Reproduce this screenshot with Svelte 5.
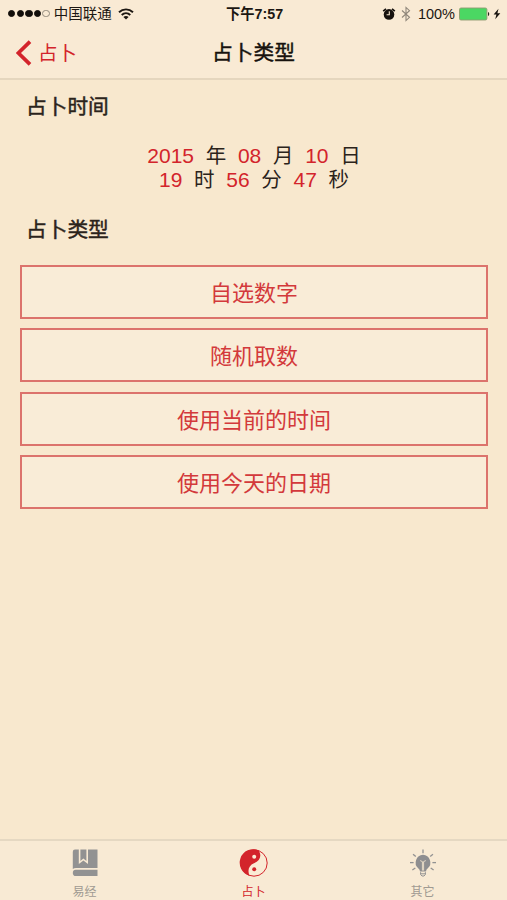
<script>
	let carrier = '中国联通';
	let clock = '下午7:57';
	let signal = [true, true, true, true, false];

	let dateRows = [
		[
			{ value: '2015', unit: '年' },
			{ value: '08', unit: '月' },
			{ value: '10', unit: '日' }
		],
		[
			{ value: '19', unit: '时' },
			{ value: '56', unit: '分' },
			{ value: '47', unit: '秒' }
		]
	];

	let types = ['自选数字', '随机取数', '使用当前的时间', '使用今天的日期'];

	let tabs = [
		{ id: 'book', label: '易经' },
		{ id: 'taiji', label: '占卜' },
		{ id: 'bulb', label: '其它' }
	];
	let active = 'taiji';

	const rays = [180, 220, 270, 320, 360, 35, 145];
</script>

<div class="screen">
	<header>
		<div class="status">
			<div class="left">
				<div class="dots">
					{#each signal as on}
						<span class="dot" class:on></span>
					{/each}
				</div>
				<span class="carrier">{carrier}</span>
				<svg class="wifi" width="16" height="12" viewBox="0 0 16 12" fill="none" stroke="#1c1712" stroke-width="1.9">
					<path d="M1 4.2C5 .4 11 .4 15 4.2" />
					<path d="M3.7 7C6.2 4.7 9.8 4.7 12.3 7" />
					<path d="M8 11.6L5.4 9C6.9 7.6 9.1 7.6 10.6 9Z" fill="#1c1712" stroke="none" />
				</svg>
			</div>
			<span class="clock">{clock}</span>
			<div class="right">
				<svg width="14" height="14" viewBox="0 0 14 14">
					<circle cx="7" cy="7.4" r="5.3" fill="#17120e" />
					<path d="M1.2 4.2L4 1.8M12.8 4.2L10 1.8" stroke="#17120e" stroke-width="1.7" />
					<path d="M7.3 4.3V7.8H4.6" stroke="#f9ead2" stroke-width="1.1" fill="none" />
				</svg>
				<svg class="bluetooth" width="10" height="16" viewBox="0 0 10 16">
					<path d="M1 4.5L8.5 11.3L5 14.6V1.4L8.5 4.7L1 11.5" fill="none" stroke="#8f867a" stroke-width="1.1" />
				</svg>
				<span class="percent">100%</span>
				<svg class="battery" width="31" height="14" viewBox="0 0 31 14">
					<rect x=".5" y="1" width="27.4" height="12" rx="1.5" fill="#4bd763" stroke="#8f9b72" stroke-width=".9" />
					<path d="M29 5C30.6 5.4 30.6 8.6 29 9Z" fill="#2a251f" />
				</svg>
				<svg class="bolt" width="8" height="12" viewBox="0 0 8 12">
					<path d="M5.5 .8L.6 6.5H3.4L2.2 11.2L7.3 5.2H4.4Z" fill="#17120e" />
				</svg>
			</div>
		</div>
		<nav>
			<button class="back">
				<svg width="16" height="26" viewBox="0 0 16 26">
					<path d="M14 1.6L2.4 13L14 24.4" fill="none" stroke="#d3242b" stroke-width="3.7" />
				</svg>
				<span>占卜</span>
			</button>
			<h1>占卜类型</h1>
		</nav>
	</header>

	<main>
		<h2>占卜时间</h2>
		<div class="date">
			{#each dateRows as row}
				<div class="date-row">
					{#each row as part}
						<span class="value">{part.value}</span>
						<span class="unit">{part.unit}</span>
					{/each}
				</div>
			{/each}
		</div>
		<h2>占卜类型</h2>
		<div class="types">
			{#each types as type}
				<button class="type">{type}</button>
			{/each}
		</div>
	</main>

	<footer>
		{#each tabs as tab}
			<button class="tab" class:active={tab.id === active}>
				<svg width="30" height="30" viewBox="0 0 30 30">
					{#if tab.id === 'book'}
						<path d="M5 1.5H8.8V16L13.4 12.6L18 16V1.5H27.5V20H6Q4 20 2.8 21V3.8Q2.8 1.5 5 1.5Z" fill="#929292" />
						<path d="M10.4 1.5H16.4V13L13.4 10.6L10.4 13Z" fill="#929292" />
						<path d="M5.8 21.8H27.5V28H5.8Q2.8 28 2.8 24.9Q2.8 21.8 5.8 21.8Z" fill="#929292" />
					{:else if tab.id === 'taiji'}
						<circle cx="15" cy="15" r="13.2" fill="#faebd5" stroke="#d3242b" stroke-width="1" />
						<path d="M19.5 2.3A13.5 13.5 0 1 0 10.5 27.7C8.2 22.4 9.8 17.2 15 15.2C21.4 12.8 23 7.4 19.5 2.3Z" fill="#d3242b" />
						<circle cx="15.2" cy="8.7" r="2" fill="#faebd5" />
						<circle cx="15.2" cy="21.2" r="2" fill="#d3242b" />
					{:else}
						{#each rays as angle}
							<path d="M24.4 14.6H28" transform="rotate({angle} 15 14.6)" stroke="#929292" stroke-width="1.3" />
						{/each}
						<path d="M15 6.8A7.7 7.7 0 0 0 10.2 20.2Q12 21.7 12 23.6H18Q18 21.7 19.8 20.2A7.7 7.7 0 0 0 15 6.8Z" fill="#8e8e90" />
						<path d="M12.2 12.6L14.4 13.6V22.6M17.8 12.6L15.6 13.6V22.6" fill="none" stroke="#f1e3cd" stroke-width=".9" />
						<path d="M12.6 24.2V26.5L14 28H16L17.4 26.5V24.2M12.6 25.8H17.4" fill="none" stroke="#929292" />
					{/if}
				</svg>
				<span>{tab.label}</span>
			</button>
		{/each}
	</footer>
</div>

<style>
	:global(body) {
		margin: 0;
	}

	.screen {
		display: flex;
		flex-direction: column;
		height: 900px;
		background: #f8e8ce;
		color: #2b231b;
		font-family: 'Liberation Sans', 'Noto Sans CJK SC', sans-serif;
	}

	button {
		padding: 0;
		border: none;
		background: none;
		font-family: inherit;
	}

	header {
		box-sizing: border-box;
		height: 80px;
		background: #f9ead4;
		border-bottom: 2px solid #e5d6be;
	}

	.status {
		display: grid;
		grid-template-columns: 1fr auto 1fr;
		align-items: center;
		height: 27px;
		padding: 0 6px 0 8px;
		color: #1c1712;
	}

	.left,
	.right {
		display: flex;
		align-items: center;
	}

	.right {
		justify-content: flex-end;
	}

	.dots {
		display: flex;
		gap: 1.2px;
	}

	.dot {
		box-sizing: border-box;
		width: 7.4px;
		height: 7.4px;
		border: 1px solid #938a7d;
		border-radius: 50%;
	}

	.dot.on {
		border-color: #120e0a;
		background: #120e0a;
	}

	.carrier {
		margin-left: 4px;
		font-size: 14.5px;
		line-height: 20px;
	}

	.wifi {
		margin-left: 6px;
	}

	.clock {
		font-size: 14.3px;
		font-weight: bold;
		line-height: 20px;
	}

	.bluetooth {
		margin-left: 5px;
	}

	.percent {
		margin-left: 7px;
		font-size: 14.5px;
	}

	.battery {
		margin-left: 4px;
	}

	.bolt {
		margin-left: 3px;
	}

	nav {
		display: grid;
		grid-template-columns: 1fr auto 1fr;
		align-items: center;
		height: 51px;
	}

	.back {
		display: flex;
		align-items: center;
		gap: 6px;
		padding-left: 16px;
		color: #d3242b;
		font-size: 19.5px;
		line-height: 30px;
	}

	h1,
	h2 {
		margin: 0;
		font-size: 20.7px;
		line-height: 30px;
		font-weight: 400;
		-webkit-text-stroke: 0.45px;
	}

	h1 {
		color: #17120e;
	}

	main {
		flex: 1;
		padding: 12px 19px 0 20px;
	}

	h2 {
		padding-left: 6px;
	}

	.date {
		margin: 21px 0 22px;
		padding-top: 0.5px;
	}

	.date-row {
		display: flex;
		justify-content: center;
		gap: 11.7px;
		height: 24.5px;
		font-size: 21px;
		line-height: 24.5px;
	}

	.value {
		color: #d3242b;
	}

	.unit {
		font-size: 20.5px;
	}

	.types {
		display: flex;
		flex-direction: column;
		gap: 9.5px;
		margin-top: 20px;
	}

	.type {
		box-sizing: border-box;
		height: 54px;
		padding-bottom: 2px;
		border: 2px solid #dc736c;
		background: #f9ecd7;
		color: #d3393b;
		font-size: 22px;
	}

	footer {
		box-sizing: border-box;
		display: grid;
		grid-template-columns: repeat(3, 1fr);
		height: 61px;
		border-top: 2px solid #e5d8c2;
		background: #f8ead4;
	}

	.tab {
		display: flex;
		flex-direction: column;
		align-items: center;
		padding-top: 7px;
		color: #a09a92;
		font-size: 12px;
		line-height: 18px;
	}

	.tab span {
		margin-top: 5px;
	}

	.tab.active {
		color: #d3242b;
	}
</style>
